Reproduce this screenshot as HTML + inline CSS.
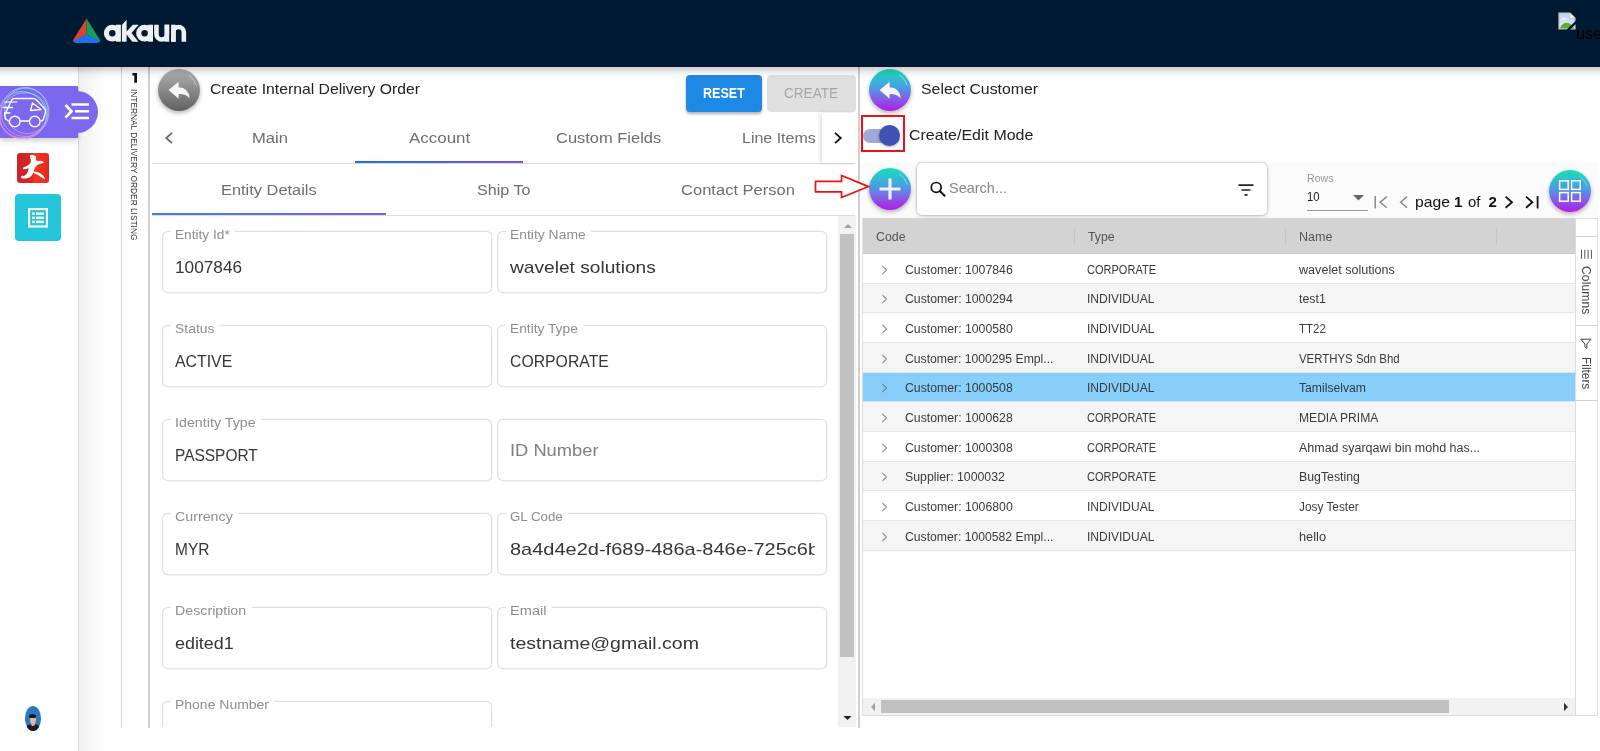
<!DOCTYPE html>
<html><head><meta charset="utf-8"><title>akaun</title>
<style>
*{box-sizing:border-box;margin:0;padding:0}
html,body{width:1600px;height:751px;overflow:hidden;background:#fff;font-family:"Liberation Sans",sans-serif;}
body{position:relative}
.a{position:absolute}
.t{position:absolute;white-space:nowrap;}
#nav{left:0;top:0;width:1600px;height:67px;background:#001a33;border-bottom:1px solid #0b1530;z-index:5}
#navsh{left:-30px;top:0;width:1660px;height:67px;background:#001a33;box-shadow:0 2px 9px rgba(0,0,0,.3);z-index:4}
#side{left:0;top:66px;width:79px;height:685px;background:#fff;border-right:1px solid #dcdcdc;z-index:2}
#sideshade{left:79px;top:66px;width:26px;height:685px;background:linear-gradient(to right,#f0f0f0,#ffffff);}
.vline{width:1px;background:#c4c4c4}
.fld{position:absolute;height:62px;border:1px solid #dcdcdc;border-radius:6px;background:#fff}
.gap{position:absolute;height:3px;background:#fff;top:-2px}
.circ{position:absolute;width:42px;height:42px;border-radius:50%;box-shadow:0 2px 4px rgba(0,0,0,.3)}
.grad{background:linear-gradient(to bottom,#16e0b8 0%,#4a9be8 45%,#7a6be6 65%,#b31be6 100%)}
.row{position:absolute;left:863px;width:712px;border-bottom:1px solid #e1e4e8}
#app{position:absolute;left:0;top:0;width:1600px;height:751px;will-change:transform;overflow:hidden}

</style></head><body>
<div id="app">
<!-- NAVBAR -->
<div id="navsh" class="a"></div>
<div id="nav" class="a">
  <svg class="a" style="left:70px;top:14px" width="124" height="34" viewBox="70 14 124 34">
    <path d="M86.6 18.6 L73.2 39.8 Q72.6 40.8 73.4 41.4 L86.6 34.4 Z" fill="#dd4330"/>
    <path d="M86.6 18.6 L99.8 39.8 Q100.4 40.8 99.6 41.4 L86.6 34.4 Z" fill="#14a05a"/>
    <path d="M86.6 34.2 L73 41 Q74 43 76.2 43 L97 43 Q99.2 43 100.2 41 Z" fill="#1a73e8"/>
    <g fill="#f0f0f0">
      <rect x="116" y="24.7" width="4.9" height="17"/>
      <path d="M121.9 24.9 L126.6 19.7 V31.6 L132.8 24.7 H138.7 L131.5 33.1 L138.4 41.7 H132.3 L126.6 34.6 V41.7 H121.9 Z"/>
      <rect x="148.1" y="24.7" width="4.9" height="17"/>
      <rect x="164.6" y="24.7" width="4.6" height="17"/>
      <rect x="171.1" y="24.7" width="4.6" height="17"/>
    </g>
    <g fill="none" stroke="#f0f0f0">
      <circle cx="112.3" cy="33.15" r="5.85" stroke-width="5.2"/>
      <circle cx="144.6" cy="33.15" r="5.85" stroke-width="5.2"/>
      <path d="M156.45 24.7 V34.2 a5.22 5.22 0 0 0 10.45 0 V24.7" stroke-width="4.6"/>
      <path d="M173.4 41.7 V32.2 a5.22 5.22 0 0 1 10.45 0 V41.7" stroke-width="4.6"/>
    </g>
  </svg>
  <!-- broken image -->
  <svg class="a" style="left:1558px;top:12px" width="18" height="18" viewBox="0 0 18 18">
    <defs><linearGradient id="sky" x1="0" y1="0" x2="0" y2="1"><stop offset="0" stop-color="#b9d0f3"/><stop offset="1" stop-color="#e9eef9"/></linearGradient></defs>
    <path d="M1 1 H12 L17 6 V17 H1 Z" fill="url(#sky)" stroke="#c4c4c4" stroke-width="1.2"/>
    <path d="M12 1 V6 H17 Z" fill="#fff" stroke="#c4c4c4" stroke-width="0.8"/>
    <path d="M2 16.4 Q3.5 11.3 8.5 10.8 Q11.5 10.8 13.5 13 L16.4 16.4 Z" fill="#5aab35"/>
    <path d="M3.6 7.2 q1.5 -2.6 3.2 -0.6 q1.4 -0.9 2.2 0.6 z" fill="#fff"/>
    <path d="M8.2 18 L18 8.6 V12 L11.6 18 Z" fill="#001a33"/>
  </svg>
  <span class="t" style="left:1576px;top:24px;font-size:16px;line-height:20px;color:#000">user</span>
</div>

<!-- SIDEBAR -->
<div id="sideshade" class="a"></div>
<div id="side" class="a">
  <div class="a" style="left:0;top:20px;width:78px;height:52px;background:#7b68ee;box-shadow:0 3px 5px rgba(0,0,0,.18)"></div>
  <div class="a" style="left:56px;top:24.8px;width:42px;height:42px;border-radius:50%;background:#7b68ee"></div>
  <!-- van icon -->
  <svg class="a" style="left:0;top:20px" width="56" height="54" viewBox="0 0 56 54">
    <defs><linearGradient id="rg" x1="0" y1="0" x2="0" y2="1"><stop offset="0" stop-color="#7fe0ff"/><stop offset="1" stop-color="#f08be8"/></linearGradient></defs>
    <g fill="none" stroke="url(#rg)" stroke-width="0.75">
      <ellipse cx="25" cy="26" rx="24" ry="24.5"/>
      <ellipse cx="22.5" cy="29" rx="24" ry="23.5" transform="rotate(25 22 29)"/>
      <ellipse cx="26.5" cy="25" rx="21.5" ry="23" transform="rotate(-20 26 25)"/>
      <ellipse cx="24" cy="29.5" rx="22" ry="24" transform="rotate(60 24 29)"/>
    </g>
    <g fill="none" stroke="#fff" stroke-width="1.35" stroke-linecap="round" stroke-linejoin="round">
      <path d="M9 35 L5.5 33 L4.5 29 L12 13.5 Q13 12.5 15 12.5 L33 12.5 Q35 12.5 36.5 14 L44.5 22.5 Q45.8 24 45.5 26 L43.5 33 Q43 35 41 35"/>
      <path d="M20.5 35 L29 35"/>
      <circle cx="14.8" cy="35.5" r="5.3"/>
      <circle cx="34.8" cy="35.5" r="5.3"/>
      <path d="M32.5 17 L30.5 24.5 L41 23.5 Z"/>
      <path d="M4.5 16 L17 16" stroke-opacity=".75"/>
      <path d="M3.5 21.5 L12.5 21.5"/>
      <path d="M4.5 27 L10 27"/>
    </g>
  </svg>
  <!-- menu icon -->
  <svg class="a" style="left:64px;top:36px" width="26" height="20" viewBox="0 0 26 20">
    <g stroke="#fff" stroke-width="2.5" fill="none">
      <path d="M7.5 2.5 H25"/><path d="M11 9.3 H25"/><path d="M7.5 16 H25"/>
      <path d="M1.5 3 L7.5 9.3 L1.5 15.6" stroke-width="2.7"/>
    </g>
  </svg>
  <!-- red icon -->
  <div class="a" style="left:17px;top:87px;width:32px;height:29.5px;border-radius:3px;background:linear-gradient(to right,#c9222c 0%,#dc2420 45%,#ee3a24 55%,#e82620 100%)"></div>
  <svg class="a" style="left:17px;top:87px" width="32" height="30" viewBox="0 0 32 30">
    <path d="M12.9 2.3 Q14.5 1.6 16.2 2 Q18.2 2.5 19 3.5 Q19.3 5.3 18.7 6.8 L20.5 8.3 Q24 7.2 26.8 8.9 Q26.8 9.6 26.3 9.9 Q22.5 10.3 20.2 12.1 Q18.2 13.8 17.2 16.2 L16.6 18.4 Q20 18.4 22.8 19.9 Q26.5 21.8 28.3 26.3 Q26.5 25.8 24.3 24.3 Q21 21.5 16.2 19.8 Q15.5 21.5 14.7 22.8 Q13 24.5 11.1 24.9 Q8.5 25.8 6.1 25.5 Q4.5 25.4 4 24.8 Q3.9 23.8 4.4 23.2 Q4.9 22.6 5.4 22.6 Q6 23.3 6.9 23 Q8.5 22.3 9.6 20.7 Q10.9 18.9 11.5 16.9 Q11.5 15.6 11.1 15.2 Q9 16 6.8 16.2 Q6 16.1 5.8 15.4 Q5.8 14.7 6.2 14.4 Q10 13.5 12.6 11.1 Q13.9 9.7 13.9 8.1 Q13.8 6.5 13.2 5.1 Q12.7 3.5 12.9 2.3 Z" fill="#fff"/>
  </svg>
  <!-- cyan box -->
  <div class="a" style="left:14.7px;top:128px;width:46.6px;height:47px;border-radius:4px;background:#26c6da"></div>
  <svg class="a" style="left:28px;top:141.5px" width="20" height="20" viewBox="0 0 20 20">
    <rect x="1" y="1" width="18" height="17.5" fill="none" stroke="#fff" stroke-width="2.2"/>
    <g fill="#fff"><rect x="4.2" y="4.5" width="2.6" height="2.4"/><rect x="4.2" y="8.6" width="2.6" height="2.4"/><rect x="4.2" y="12.7" width="2.6" height="2.4"/>
    <rect x="8" y="4.5" width="7.8" height="2.4"/><rect x="8" y="8.6" width="7.8" height="2.4"/><rect x="8" y="12.7" width="7.8" height="2.4"/></g>
  </svg>
  <!-- avatar -->
  <div class="a" style="left:24.6px;top:640px;width:16.6px;height:25.2px;border-radius:50%;background:#2879c0;overflow:hidden">
    <div class="a" style="left:0;top:18.3px;width:16.6px;height:9px;border-radius:50% 50% 0 0/60% 60% 0 0;background:#1b1b20"></div>
    <div class="a" style="left:6.6px;top:16px;width:3.4px;height:4.2px;border-radius:0 0 50% 50%;background:#d9b09a"></div>
    <div class="a" style="left:5.3px;top:9.6px;width:6px;height:8.2px;border-radius:45% 45% 50% 50%;background:#e0b9a3"></div>
    <div class="a" style="left:4.7px;top:7.5px;width:7.1px;height:4.4px;border-radius:50% 50% 25% 25%;background:#1d1a1a"></div>
  </div>
</div>

<!-- vertical strip -->
<div class="a" style="left:121px;top:66px;width:1px;height:661.7px;background:#d4d4d4"></div>
<div class="a" style="left:148px;top:66px;width:2px;height:661.7px;background:#cfcfcf"></div>
<svg class="a" style="left:130px;top:70px" width="10" height="15" viewBox="130 70 10 15"><path d="M137 72.9 V82.8 H134.3 V75.5 H132.4 V72.9 Z" fill="#111"/></svg>
<span class="t" style="left:139px;top:88.6px;font-size:9.7px;line-height:10px;color:#333;transform-origin:0 0;transform:rotate(90deg) scaleX(0.861)" id="vt">INTERNAL DELIVERY ORDER LISTING</span>

<!-- LEFT PANEL -->
<div class="circ" style="left:158.2px;top:69.2px;background:linear-gradient(to bottom,#b0b0b0 0%,#8a8a8a 50%,#606060 100%)"></div>
<svg class="a" style="left:158.2px;top:69.2px" width="42" height="42" viewBox="0 0 42 42">
  <path d="M10.6 20.9 L20.6 12.7 V18.3 Q30.5 18.5 31.8 29.5 Q28 24.8 20.6 25.1 V29.8 Z" fill="#f6f6f6"/>
  <path d="M30.8 6.1 Q36.3 10 38.3 16.3" fill="none" stroke="rgba(255,255,255,.5)" stroke-width="1" stroke-linecap="round"/>
</svg>
<!-- buttons -->
<div class="a" style="left:686px;top:74.6px;width:76px;height:37.4px;border-radius:4px;background:#1e88e5;box-shadow:0 2px 3px rgba(0,0,0,.3)"></div>

<div class="a" style="left:767px;top:74.6px;width:88.5px;height:37.4px;border-radius:4px;background:#e0e0e0"></div>

<!-- tabs -->
<div class="a" style="left:152px;top:163px;width:703px;height:1px;background:#dcdcdc"></div>
<div class="a" style="left:354.5px;top:160.5px;width:168.5px;height:2.5px;background:linear-gradient(to right,#1a73e8,#7b4ff0)"></div>
<svg class="a" style="left:163px;top:131px" width="12" height="14" viewBox="0 0 12 14"><path d="M9 1.8 L3.2 7 L9 12.2" fill="none" stroke="#666" stroke-width="1.7"/></svg>
<div class="a" style="left:821.5px;top:113px;width:34px;height:50px;background:#fff;box-shadow:-2px 0 4px rgba(0,0,0,.13)"></div>
<svg class="a" style="left:832px;top:131px" width="12" height="14" viewBox="0 0 12 14"><path d="M3 1.8 L8.8 7 L3 12.2" fill="none" stroke="#111" stroke-width="1.8"/></svg>
<div class="a" style="left:152px;top:214.5px;width:703px;height:1px;background:#dcdcdc"></div>
<div class="a" style="left:152px;top:212.6px;width:234px;height:2.4px;background:linear-gradient(to right,#3b7de8,#7b5cf0)"></div>
<!-- red arrow -->
<svg class="a" style="left:812px;top:172px;z-index:4" width="60" height="30" viewBox="0 0 60 30">
  <path d="M3.5 9.3 H29.5 V3.5 L56.5 14.6 L29.5 25.5 V19.8 H3.5 Z" fill="#fff" stroke="#e11" stroke-width="1.7" stroke-linejoin="miter"/>
</svg>
<!-- scrollbar left panel -->
<div class="a" style="left:838.2px;top:216px;width:17.8px;height:510.8px;background:#f1f1f1"></div>
<div class="a" style="left:840px;top:233.6px;width:14px;height:423.4px;background:#c1c1c1"></div>
<svg class="a" style="left:842.5px;top:222.5px" width="10" height="6" viewBox="0 0 10 6"><path d="M1 5 L5 1 L9 5 Z" fill="#a3a3a3"/></svg>
<svg class="a" style="left:842.6px;top:714.6px" width="9" height="5.4" viewBox="0 0 10 6"><path d="M0.5 1 L5 5.5 L9.5 1 Z" fill="#222"/></svg>
<!-- divider -->
<div class="a" style="left:858px;top:66px;width:2px;height:661.8px;background:#d0d0d0"></div>
<!-- form fields -->
<svg class="a" style="left:150px;top:216px" width="689" height="511" viewBox="150 216 689 511">
<g fill="none" stroke="#dfdfdf" stroke-width="1.2">
<rect x="162.6" y="231.3" width="329.1" height="61.5" rx="5.5"/>
<rect x="497.6" y="231.3" width="329.1" height="61.5" rx="5.5"/>
<rect x="162.6" y="325.3" width="329.1" height="61.5" rx="5.5"/>
<rect x="497.6" y="325.3" width="329.1" height="61.5" rx="5.5"/>
<rect x="162.6" y="419.3" width="329.1" height="61.5" rx="5.5"/>
<rect x="497.6" y="419.3" width="329.1" height="61.5" rx="5.5"/>
<rect x="162.6" y="513.3" width="329.1" height="61.5" rx="5.5"/>
<rect x="497.6" y="513.3" width="329.1" height="61.5" rx="5.5"/>
<rect x="162.6" y="607.3" width="329.1" height="61.5" rx="5.5"/>
<rect x="497.6" y="607.3" width="329.1" height="61.5" rx="5.5"/>
<rect x="162.6" y="701.3" width="329.1" height="61.5" rx="5.5"/>
</g><g fill="#fff">
<rect x="170.8" y="229.3" width="64.3" height="4"/>
<rect x="505.8" y="229.3" width="85.3" height="4"/>
<rect x="170.8" y="323.3" width="49.1" height="4"/>
<rect x="505.8" y="323.3" width="77.4" height="4"/>
<rect x="170.8" y="417.3" width="90.3" height="4"/>
<rect x="170.8" y="511.3" width="67.4" height="4"/>
<rect x="505.8" y="511.3" width="62.3" height="4"/>
<rect x="170.8" y="605.3" width="80.8" height="4"/>
<rect x="505.8" y="605.3" width="46.1" height="4"/>
<rect x="170.8" y="699.3" width="103.6" height="4"/>
</g></svg>

<!-- RIGHT PANEL -->
<div class="circ grad" style="left:868.7px;top:69px"></div>
<svg class="a" style="left:868.7px;top:69px" width="42" height="42" viewBox="0 0 42 42">
  <path d="M10.6 20.9 L20.6 12.7 V18.3 Q30.5 18.5 31.8 29.5 Q28 24.8 20.6 25.1 V29.8 Z" fill="#f6f6f6"/>
  <path d="M30.8 6.1 Q36.3 10 38.3 16.3" fill="none" stroke="rgba(255,255,255,.5)" stroke-width="1" stroke-linecap="round"/>
</svg>
<!-- toggle + red box -->
<div class="a" style="left:863.2px;top:128.6px;width:35px;height:14px;border-radius:7px;background:#9fa8da"></div>
<div class="a" style="left:878.8px;top:125px;width:21px;height:21px;border-radius:50%;background:#3f51b5;box-shadow:0 1px 3px rgba(0,0,0,.35)"></div>
<div class="a" style="left:861px;top:114.5px;width:44px;height:37.2px;border:2px solid #ee1016"></div>
<!-- toolbar bg -->
<div class="a" style="left:860px;top:162px;width:737.5px;height:57px;background:#fbfbfb"></div>
<div class="circ grad" style="left:868.7px;top:167.6px"></div>
<svg class="a" style="left:868.7px;top:167.6px" width="42" height="42" viewBox="0 0 42 42">
  <path d="M21 10.5 V31.5 M10.5 21 H31.5" stroke="#f2f2f2" stroke-width="3.2" fill="none"/>
  <path d="M30.8 6.1 Q36.3 10 38.3 16.3" fill="none" stroke="rgba(255,255,255,.45)" stroke-width="1" stroke-linecap="round"/>
</svg>
<!-- search box -->
<div class="a" style="left:917px;top:162.5px;width:350px;height:52px;border-radius:5px;background:#fff;box-shadow:0 0 2px rgba(0,0,0,.25),0 1px 4px rgba(0,0,0,.22)"></div>
<svg class="a" style="left:929px;top:180px" width="18" height="18" viewBox="0 0 18 18">
  <circle cx="7.2" cy="7.4" r="4.9" fill="none" stroke="#111" stroke-width="1.7"/><path d="M10.8 11 L15.6 15.8" stroke="#111" stroke-width="2" stroke-linecap="round"/>
</svg>
<svg class="a" style="left:1236.8px;top:183px" width="18" height="14" viewBox="0 0 18 14">
  <path d="M1.5 2.2 H16.5 M4.5 7 H13.5 M7.5 11.8 H10.5" stroke="#222" stroke-width="1.7" fill="none"/>
</svg>
<!-- rows select -->
<div class="a" style="left:1306.5px;top:210.2px;width:61.5px;height:1px;background:#9a9a9a"></div>
<svg class="a" style="left:1352px;top:194px" width="13" height="8" viewBox="0 0 13 8"><path d="M1 1 H12 L6.5 6.6 Z" fill="#666"/></svg>
<!-- pagination icons -->
<svg class="a" style="left:1373px;top:194px" width="170" height="16" viewBox="0 0 170 16">
  <g fill="none" stroke="#8a8a8a" stroke-width="1.5"><path d="M2.2 2 V14.5"/><path d="M13.8 2.6 L7.2 8.2 L13.8 13.8"/><path d="M34 2.6 L27.6 8.2 L34 13.8"/></g>
  <g fill="none" stroke="#111" stroke-width="1.8"><path d="M132.6 2.6 L139 8.2 L132.6 13.8"/><path d="M153 2.6 L159.4 8.2 L153 13.8"/><path d="M164.6 2 V14.5"/></g>
</svg>
<!-- grid button -->
<div class="circ grad" style="left:1549.4px;top:169.7px"></div>
<svg class="a" style="left:1549.4px;top:169.7px" width="42" height="42" viewBox="0 0 42 42">
  <g fill="none" stroke="#fff" stroke-width="1.5"><rect x="10.6" y="10.8" width="8.6" height="8.6"/><rect x="22.6" y="10.8" width="8.6" height="8.6"/><rect x="10.6" y="22.6" width="8.6" height="8.6"/><rect x="22.6" y="22.6" width="8.6" height="8.6"/></g>
  <path d="M30.8 6.1 Q36.3 10 38.3 16.3" fill="none" stroke="rgba(255,255,255,.4)" stroke-width="1" stroke-linecap="round"/>
</svg>
<!-- grid frame -->
<div class="a" style="left:862px;top:218px;width:736px;height:498px;border:1px solid #dcdfe2;background:#fff"></div>
<div class="a" style="left:863px;top:218.4px;width:712px;height:35.6px;background:#d3d3d3;border-bottom:1px solid #c9cdd2"></div>
<div class="a" style="left:1073.5px;top:228px;width:1px;height:17px;background:#c2c6cb"></div>
<div class="a" style="left:1285px;top:228px;width:1px;height:17px;background:#c2c6cb"></div>
<div class="a" style="left:1496.3px;top:228px;width:1px;height:17px;background:#c2c6cb"></div>

<div class="row" style="top:254.00px;height:29.66px;background:#fff"></div>
<svg class="a" style="left:879.5px;top:264.63px" width="9" height="10" viewBox="0 0 9 10"><path d="M2.3 1 L6.6 5 L2.3 9" fill="none" stroke="#555" stroke-width="1"/></svg>
<div class="row" style="top:283.66px;height:29.66px;background:#f5f5f5"></div>
<svg class="a" style="left:879.5px;top:294.29px" width="9" height="10" viewBox="0 0 9 10"><path d="M2.3 1 L6.6 5 L2.3 9" fill="none" stroke="#555" stroke-width="1"/></svg>
<div class="row" style="top:313.32px;height:29.66px;background:#fff"></div>
<svg class="a" style="left:879.5px;top:323.95px" width="9" height="10" viewBox="0 0 9 10"><path d="M2.3 1 L6.6 5 L2.3 9" fill="none" stroke="#555" stroke-width="1"/></svg>
<div class="row" style="top:342.98px;height:29.66px;background:#f5f5f5"></div>
<svg class="a" style="left:879.5px;top:353.61px" width="9" height="10" viewBox="0 0 9 10"><path d="M2.3 1 L6.6 5 L2.3 9" fill="none" stroke="#555" stroke-width="1"/></svg>
<div class="row" style="top:372.64px;height:29.66px;background:#87cefa"></div>
<svg class="a" style="left:879.5px;top:383.27px" width="9" height="10" viewBox="0 0 9 10"><path d="M2.3 1 L6.6 5 L2.3 9" fill="none" stroke="#555" stroke-width="1"/></svg>
<div class="row" style="top:402.30px;height:29.66px;background:#f5f5f5"></div>
<svg class="a" style="left:879.5px;top:412.93px" width="9" height="10" viewBox="0 0 9 10"><path d="M2.3 1 L6.6 5 L2.3 9" fill="none" stroke="#555" stroke-width="1"/></svg>
<div class="row" style="top:431.96px;height:29.66px;background:#fff"></div>
<svg class="a" style="left:879.5px;top:442.59px" width="9" height="10" viewBox="0 0 9 10"><path d="M2.3 1 L6.6 5 L2.3 9" fill="none" stroke="#555" stroke-width="1"/></svg>
<div class="row" style="top:461.62px;height:29.66px;background:#f5f5f5"></div>
<svg class="a" style="left:879.5px;top:472.25px" width="9" height="10" viewBox="0 0 9 10"><path d="M2.3 1 L6.6 5 L2.3 9" fill="none" stroke="#555" stroke-width="1"/></svg>
<div class="row" style="top:491.28px;height:29.66px;background:#fff"></div>
<svg class="a" style="left:879.5px;top:501.91px" width="9" height="10" viewBox="0 0 9 10"><path d="M2.3 1 L6.6 5 L2.3 9" fill="none" stroke="#555" stroke-width="1"/></svg>
<div class="row" style="top:520.94px;height:29.66px;background:#f5f5f5"></div>
<svg class="a" style="left:879.5px;top:531.57px" width="9" height="10" viewBox="0 0 9 10"><path d="M2.3 1 L6.6 5 L2.3 9" fill="none" stroke="#555" stroke-width="1"/></svg>

<!-- horizontal scrollbar -->
<div class="a" style="left:863px;top:698px;width:712px;height:17px;background:#f1f1f1"></div>
<div class="a" style="left:881.3px;top:699.6px;width:568px;height:13.6px;background:#c1c1c1"></div>
<svg class="a" style="left:869.5px;top:701.5px" width="6" height="10" viewBox="0 0 6 10"><path d="M5 0.8 L1 5 L5 9.2 Z" fill="#a3a3a3"/></svg>
<svg class="a" style="left:1563px;top:701.5px" width="6" height="10" viewBox="0 0 6 10"><path d="M1 0.8 L5 5 L1 9.2 Z" fill="#333"/></svg>
<!-- side bar columns/filters -->
<div class="a" style="left:1574.7px;top:219.2px;width:1px;height:495.5px;background:#d9dde2"></div>
<div class="a" style="left:1575.7px;top:236.3px;width:21px;height:1px;background:#d0d4d9"></div>
<div class="a" style="left:1575.7px;top:324.5px;width:21px;height:1px;background:#d0d4d9"></div>
<div class="a" style="left:1575.7px;top:400px;width:21px;height:1px;background:#d0d4d9"></div>
<svg class="a" style="left:1580px;top:249px" width="13" height="11" viewBox="0 0 13 11"><path d="M1.5 0.8 V9.8 M4.8 0.8 V9.8 M8.1 0.8 V9.8 M11.4 0.8 V9.8" stroke="#555" stroke-width="1" fill="none"/></svg>
<svg class="a" style="left:1580px;top:338px" width="12" height="12" viewBox="0 0 12 12"><path d="M0.8 1.2 H11 L6.9 6 V10.4 L4.9 9 V6 Z" fill="none" stroke="#444" stroke-width="1"/></svg>
<span class="t" style="left:1591.5px;top:265.5px;font-size:12px;line-height:12px;color:#444;transform-origin:0 0;transform:rotate(90deg);letter-spacing:0.17px">Columns</span>
<span class="t" style="left:1591.5px;top:356.5px;font-size:12px;line-height:12px;color:#444;transform-origin:0 0;transform:rotate(90deg);letter-spacing:-0.05px">Filters</span>


<span class="t" style="left:210.0px;top:78.2px;font-size:15px;line-height:21px;color:#222;transform:scaleX(1.0496);transform-origin:0 50%;">Create Internal Delivery Order</span>
<span class="t" style="left:252.0px;top:127.0px;font-size:15.5px;line-height:22px;color:#6e6e6e;transform:scaleX(1.0711);transform-origin:0 50%;">Main</span>
<span class="t" style="left:409.3px;top:127.0px;font-size:15.5px;line-height:22px;color:#6e6e6e;transform:scaleX(1.0926);transform-origin:0 50%;">Account</span>
<span class="t" style="left:556.4px;top:127.0px;font-size:15.5px;line-height:22px;color:#6e6e6e;transform:scaleX(1.0620);transform-origin:0 50%;">Custom Fields</span>
<span class="t" style="left:741.8px;top:127.0px;font-size:15.5px;line-height:22px;color:#6e6e6e;transform:scaleX(1.0305);transform-origin:0 50%;">Line Items</span>
<span class="t" style="left:221.0px;top:178.5px;font-size:15.5px;line-height:22px;color:#6e6e6e;transform:scaleX(1.0580);transform-origin:0 50%;">Entity Details</span>
<span class="t" style="left:476.5px;top:178.5px;font-size:15.5px;line-height:22px;color:#6e6e6e;transform:scaleX(1.0404);transform-origin:0 50%;">Ship To</span>
<span class="t" style="left:681.0px;top:178.5px;font-size:15.5px;line-height:22px;color:#6e6e6e;transform:scaleX(1.0670);transform-origin:0 50%;">Contact Person</span>
<span class="t" style="left:703.2px;top:83.4px;font-size:14px;line-height:20px;color:#fff;font-weight:bold;transform:scaleX(0.8953);transform-origin:0 50%;">RESET</span>
<span class="t" style="left:784.1px;top:83.4px;font-size:14px;line-height:20px;color:#a6a6a6;transform:scaleX(0.9686);transform-origin:0 50%;">CREATE</span>
<span class="t" style="left:920.6px;top:78.3px;font-size:15px;line-height:21px;color:#222;transform:scaleX(1.0561);transform-origin:0 50%;">Select Customer</span>
<span class="t" style="left:908.6px;top:124.0px;font-size:15px;line-height:21px;color:#222;transform:scaleX(1.0657);transform-origin:0 50%;">Create/Edit Mode</span>
<span class="t" style="left:949.0px;top:178.0px;font-size:14.5px;line-height:20px;color:#888;transform:scaleX(0.9995);transform-origin:0 50%;">Search...</span>
<span class="t" style="left:1306.5px;top:171.5px;font-size:10px;line-height:14px;color:#999;transform:scaleX(1.0593);transform-origin:0 50%;">Rows</span>
<span class="t" style="left:1306.5px;top:188.2px;font-size:13px;line-height:18px;color:#222;transform:scaleX(0.8639);transform-origin:0 50%;">10</span>
<span class="t" style="left:1415.0px;top:190.9px;font-size:15px;line-height:21px;color:#111;transform:scaleX(1.0487);transform-origin:0 50%;">page</span>
<span class="t" style="left:1454.0px;top:190.9px;font-size:15px;line-height:21px;color:#111;font-weight:bold;">1</span>
<span class="t" style="left:1468.0px;top:190.9px;font-size:15px;line-height:21px;color:#111;transform:scaleX(0.9908);transform-origin:0 50%;">of</span>
<span class="t" style="left:1488.4px;top:190.9px;font-size:15px;line-height:21px;color:#111;font-weight:bold;">2</span>
<span class="t" style="left:875.8px;top:227.5px;font-size:13px;line-height:18px;color:#555;transform:scaleX(0.9492);transform-origin:0 50%;">Code</span>
<span class="t" style="left:1087.8px;top:227.5px;font-size:13px;line-height:18px;color:#555;transform:scaleX(0.9401);transform-origin:0 50%;">Type</span>
<span class="t" style="left:1299.0px;top:227.5px;font-size:13px;line-height:18px;color:#555;transform:scaleX(0.9629);transform-origin:0 50%;">Name</span>
<span class="t" style="left:905.3px;top:261.5px;font-size:12px;line-height:17px;color:#3a3a3a;transform:scaleX(1.0218);transform-origin:0 50%;">Customer: 1007846</span>
<span class="t" style="left:1087.2px;top:261.5px;font-size:12px;line-height:17px;color:#3a3a3a;transform:scaleX(0.9185);transform-origin:0 50%;">CORPORATE</span>
<span class="t" style="left:1298.8px;top:261.5px;font-size:12px;line-height:17px;color:#3a3a3a;transform:scaleX(1.0493);transform-origin:0 50%;">wavelet solutions</span>
<span class="t" style="left:905.3px;top:291.2px;font-size:12px;line-height:17px;color:#3a3a3a;transform:scaleX(1.0218);transform-origin:0 50%;">Customer: 1000294</span>
<span class="t" style="left:1087.2px;top:291.2px;font-size:12px;line-height:17px;color:#3a3a3a;transform:scaleX(1.0006);transform-origin:0 50%;">INDIVIDUAL</span>
<span class="t" style="left:1298.8px;top:291.2px;font-size:12px;line-height:17px;color:#3a3a3a;transform:scaleX(1.0302);transform-origin:0 50%;">test1</span>
<span class="t" style="left:905.3px;top:320.8px;font-size:12px;line-height:17px;color:#3a3a3a;transform:scaleX(1.0218);transform-origin:0 50%;">Customer: 1000580</span>
<span class="t" style="left:1087.2px;top:320.8px;font-size:12px;line-height:17px;color:#3a3a3a;transform:scaleX(1.0006);transform-origin:0 50%;">INDIVIDUAL</span>
<span class="t" style="left:1298.8px;top:320.8px;font-size:12px;line-height:17px;color:#3a3a3a;transform:scaleX(0.9566);transform-origin:0 50%;">TT22</span>
<span class="t" style="left:905.3px;top:350.5px;font-size:12px;line-height:17px;color:#3a3a3a;transform:scaleX(1.0166);transform-origin:0 50%;">Customer: 1000295 Empl...</span>
<span class="t" style="left:1087.2px;top:350.5px;font-size:12px;line-height:17px;color:#3a3a3a;transform:scaleX(1.0006);transform-origin:0 50%;">INDIVIDUAL</span>
<span class="t" style="left:1298.8px;top:350.5px;font-size:12px;line-height:17px;color:#3a3a3a;transform:scaleX(0.9514);transform-origin:0 50%;">VERTHYS Sdn Bhd</span>
<span class="t" style="left:905.3px;top:380.2px;font-size:12px;line-height:17px;color:#3a3a3a;transform:scaleX(1.0218);transform-origin:0 50%;">Customer: 1000508</span>
<span class="t" style="left:1087.2px;top:380.2px;font-size:12px;line-height:17px;color:#3a3a3a;transform:scaleX(1.0006);transform-origin:0 50%;">INDIVIDUAL</span>
<span class="t" style="left:1298.8px;top:380.2px;font-size:12px;line-height:17px;color:#3a3a3a;transform:scaleX(1.0134);transform-origin:0 50%;">Tamilselvam</span>
<span class="t" style="left:905.3px;top:409.8px;font-size:12px;line-height:17px;color:#3a3a3a;transform:scaleX(1.0218);transform-origin:0 50%;">Customer: 1000628</span>
<span class="t" style="left:1087.2px;top:409.8px;font-size:12px;line-height:17px;color:#3a3a3a;transform:scaleX(0.9185);transform-origin:0 50%;">CORPORATE</span>
<span class="t" style="left:1298.8px;top:409.8px;font-size:12px;line-height:17px;color:#3a3a3a;transform:scaleX(1.0078);transform-origin:0 50%;">MEDIA PRIMA</span>
<span class="t" style="left:905.3px;top:439.5px;font-size:12px;line-height:17px;color:#3a3a3a;transform:scaleX(1.0218);transform-origin:0 50%;">Customer: 1000308</span>
<span class="t" style="left:1087.2px;top:439.5px;font-size:12px;line-height:17px;color:#3a3a3a;transform:scaleX(0.9185);transform-origin:0 50%;">CORPORATE</span>
<span class="t" style="left:1298.8px;top:439.5px;font-size:12px;line-height:17px;color:#3a3a3a;transform:scaleX(1.0402);transform-origin:0 50%;">Ahmad syarqawi bin mohd has...</span>
<span class="t" style="left:905.3px;top:469.1px;font-size:12px;line-height:17px;color:#3a3a3a;transform:scaleX(1.0254);transform-origin:0 50%;">Supplier: 1000032</span>
<span class="t" style="left:1087.2px;top:469.1px;font-size:12px;line-height:17px;color:#3a3a3a;transform:scaleX(0.9185);transform-origin:0 50%;">CORPORATE</span>
<span class="t" style="left:1298.8px;top:469.1px;font-size:12px;line-height:17px;color:#3a3a3a;transform:scaleX(1.0257);transform-origin:0 50%;">BugTesting</span>
<span class="t" style="left:905.3px;top:498.8px;font-size:12px;line-height:17px;color:#3a3a3a;transform:scaleX(1.0218);transform-origin:0 50%;">Customer: 1006800</span>
<span class="t" style="left:1087.2px;top:498.8px;font-size:12px;line-height:17px;color:#3a3a3a;transform:scaleX(1.0006);transform-origin:0 50%;">INDIVIDUAL</span>
<span class="t" style="left:1298.8px;top:498.8px;font-size:12px;line-height:17px;color:#3a3a3a;transform:scaleX(0.9873);transform-origin:0 50%;">Josy Tester</span>
<span class="t" style="left:905.3px;top:528.5px;font-size:12px;line-height:17px;color:#3a3a3a;transform:scaleX(1.0166);transform-origin:0 50%;">Customer: 1000582 Empl...</span>
<span class="t" style="left:1087.2px;top:528.5px;font-size:12px;line-height:17px;color:#3a3a3a;transform:scaleX(1.0006);transform-origin:0 50%;">INDIVIDUAL</span>
<span class="t" style="left:1298.8px;top:528.5px;font-size:12px;line-height:17px;color:#3a3a3a;transform:scaleX(1.0647);transform-origin:0 50%;">hello</span>
<span class="t" style="left:175.3px;top:225.7px;font-size:13px;line-height:18px;color:#8e8e8e;transform:scaleX(1.0513);transform-origin:0 50%;">Entity Id*</span>
<span class="t" style="left:175.3px;top:255.5px;font-size:17px;line-height:24px;color:#363636;transform:scaleX(1.0138);transform-origin:0 50%;">1007846</span>
<span class="t" style="left:510.1px;top:225.7px;font-size:13px;line-height:18px;color:#8e8e8e;transform:scaleX(1.0690);transform-origin:0 50%;">Entity Name</span>
<span class="t" style="left:510.1px;top:255.5px;font-size:17px;line-height:24px;color:#363636;transform:scaleX(1.1261);transform-origin:0 50%;">wavelet solutions</span>
<span class="t" style="left:175.3px;top:319.7px;font-size:13px;line-height:18px;color:#8e8e8e;transform:scaleX(1.0716);transform-origin:0 50%;">Status</span>
<span class="t" style="left:175.3px;top:349.5px;font-size:17px;line-height:24px;color:#363636;transform:scaleX(0.9315);transform-origin:0 50%;">ACTIVE</span>
<span class="t" style="left:510.1px;top:319.7px;font-size:13px;line-height:18px;color:#8e8e8e;transform:scaleX(1.0581);transform-origin:0 50%;">Entity Type</span>
<span class="t" style="left:510.1px;top:349.5px;font-size:17px;line-height:24px;color:#363636;transform:scaleX(0.9284);transform-origin:0 50%;">CORPORATE</span>
<span class="t" style="left:175.3px;top:413.7px;font-size:13px;line-height:18px;color:#8e8e8e;transform:scaleX(1.0982);transform-origin:0 50%;">Identity Type</span>
<span class="t" style="left:175.3px;top:443.5px;font-size:17px;line-height:24px;color:#363636;transform:scaleX(0.9097);transform-origin:0 50%;">PASSPORT</span>
<span class="t" style="left:175.3px;top:507.7px;font-size:13px;line-height:18px;color:#8e8e8e;transform:scaleX(1.0957);transform-origin:0 50%;">Currency</span>
<span class="t" style="left:175.3px;top:537.5px;font-size:17px;line-height:24px;color:#363636;transform:scaleX(0.9105);transform-origin:0 50%;">MYR</span>
<span class="t" style="left:510.1px;top:507.7px;font-size:13px;line-height:18px;color:#8e8e8e;transform:scaleX(1.0221);transform-origin:0 50%;">GL Code</span>
<span class="t" style="left:510.1px;top:537.5px;font-size:17px;line-height:24px;color:#363636;transform:scaleX(1.1759);transform-origin:0 50%;width:258.5px;overflow:hidden;">8a4d4e2d-f689-486a-846e-725c6b</span>
<span class="t" style="left:175.3px;top:601.7px;font-size:13px;line-height:18px;color:#8e8e8e;transform:scaleX(1.0949);transform-origin:0 50%;">Description</span>
<span class="t" style="left:175.3px;top:631.5px;font-size:17px;line-height:24px;color:#363636;transform:scaleX(1.0523);transform-origin:0 50%;">edited1</span>
<span class="t" style="left:510.1px;top:601.7px;font-size:13px;line-height:18px;color:#8e8e8e;transform:scaleX(1.1225);transform-origin:0 50%;">Email</span>
<span class="t" style="left:510.1px;top:631.5px;font-size:17px;line-height:24px;color:#363636;transform:scaleX(1.1478);transform-origin:0 50%;">testname@gmail.com</span>
<span class="t" style="left:175.3px;top:695.7px;font-size:13px;line-height:18px;color:#8e8e8e;transform:scaleX(1.0749);transform-origin:0 50%;">Phone Number</span>
<span class="t" style="left:510.1px;top:438.5px;font-size:17px;line-height:24px;color:#808080;transform:scaleX(1.0768);transform-origin:0 50%;">ID Number</span>
</div>
</body></html>
